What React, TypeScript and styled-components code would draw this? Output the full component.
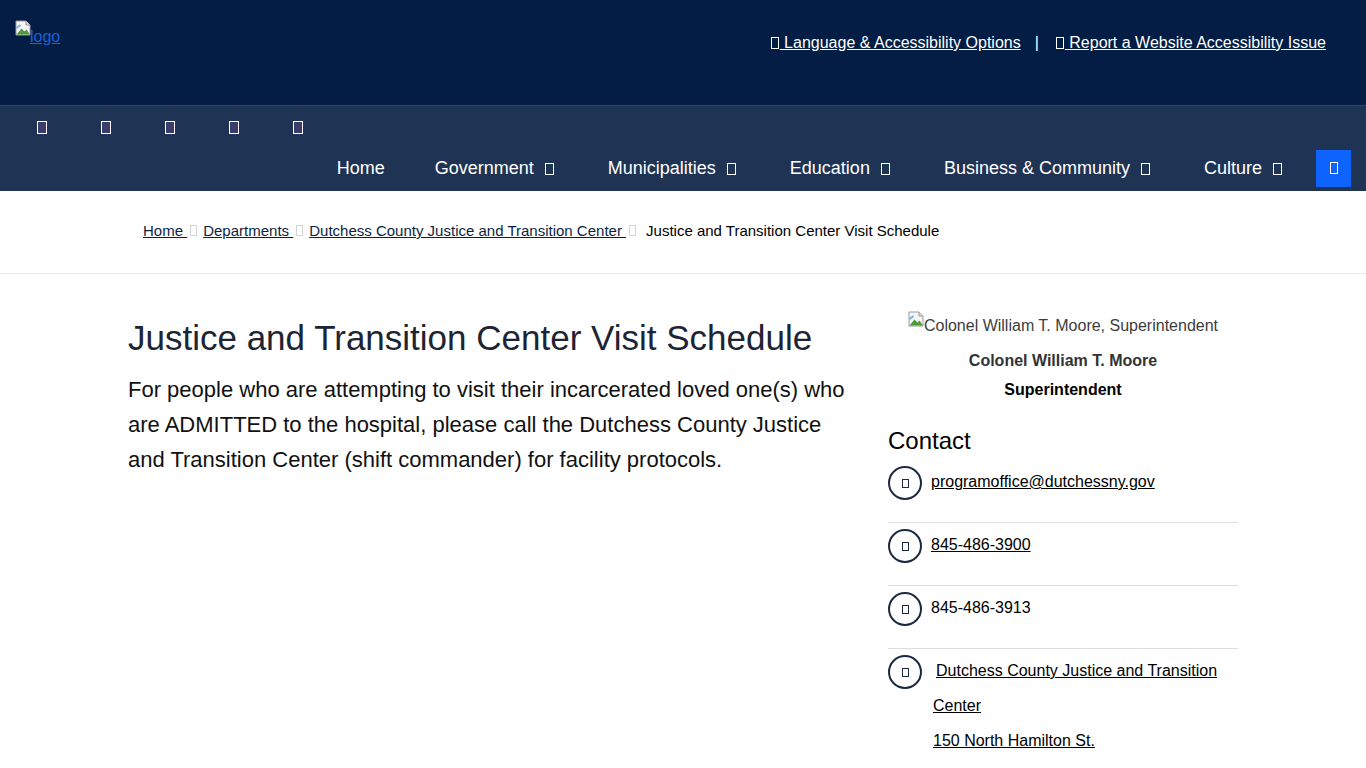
import React from "react";
import styled, { createGlobalStyle } from "styled-components";

const GlobalStyle = createGlobalStyle`
  *, *::before, *::after { box-sizing: border-box; }
  body {
    margin: 0;
    font-family: "Liberation Sans", Arial, sans-serif;
    font-size: 16px;
    color: #000;
    background: #fff;
  }
  p, h1, h2, h3 { margin: 0; }
`;

const Tofu = styled.span<{ w?: number; h?: number; fill?: string; color?: string }>`
  display: inline-block;
  width: ${(p) => p.w ?? 9}px;
  height: ${(p) => p.h ?? 12}px;
  border: 1px solid ${(p) => p.color ?? "currentColor"};
  background: ${(p) => p.fill ?? "transparent"};
  vertical-align: middle;
  flex: none;
`;

const TopBar = styled.header`
  background: #031d44;
  height: 105px;
  display: flex;
  justify-content: space-between;
  align-items: flex-start;
  padding: 20px 40px 0 15px;
`;

const LogoLink = styled.a`
  display: inline-flex;
  align-items: flex-start;
  color: #1d5fd8;
  font-size: 16px;
  line-height: 18px;
  text-decoration: underline;
  svg { margin-right: -1px; }
  span { padding-top: 8px; }
`;

const UtilityLinks = styled.div`
  display: flex;
  align-items: center;
  margin-top: 14px;
  color: #fff;
  font-size: 16px;
  line-height: 18px;
`;

const UtilityLink = styled.a`
  display: inline-flex;
  align-items: center;
  color: #fff;
  text-decoration: underline;
  white-space: pre;
  ${Tofu} { margin: 0 1px 0 2px; }
`;

const Pipe = styled.span`
  margin: 0 15px 0 14px;
`;

const Nav = styled.nav`
  background: #1f3354;
  border-top: 1px solid #33466a;
  height: 86px;
  padding-top: 15px;
  display: flex;
  flex-direction: column;
`;

const QuickIcons = styled.div`
  display: flex;
  gap: 54px;
  padding-left: 37px;
  height: 13px;
  color: #fff;
`;

const MenuRow = styled.div`
  display: flex;
  justify-content: flex-end;
  align-items: center;
  padding-right: 15px;
  margin-top: 15px;
`;

const MenuItem = styled.a`
  display: inline-flex;
  align-items: center;
  padding: 0 25px;
  color: #fff;
  font-size: 18px;
  line-height: 37px;
  padding-top: 1px;
  text-decoration: none;
  ${Tofu} { margin: 0 4px 0 11px; }
`;

const SearchButton = styled.button`
  width: 35px;
  height: 37px;
  margin-left: 5px;
  border: none;
  background: #0d63fb;
  color: #fff;
  display: flex;
  align-items: center;
  justify-content: center;
  padding: 0;
`;

const Container = styled.div`
  width: 1140px;
  margin: 0 auto;
  padding: 0 15px;
`;

const BreadcrumbBar = styled.div`
  border-bottom: 1px solid #e8e8e8;
  height: 83px;
  padding-top: 31px;
`;

const Crumbs = styled.div`
  padding-left: 15px;
  display: flex;
  align-items: center;
  font-size: 15px;
  line-height: 17px;
`;

const CrumbLink = styled.a`
  color: #0a1f44;
  text-decoration: underline;
  white-space: pre;
`;

const CrumbSep = styled(Tofu)`
  margin: 0 6px 0 3px;
  color: #d4d4d4;
`;

const CrumbCurrent = styled.span`
  margin-left: 4px;
  color: #000;
`;

const Content = styled.div`
  display: grid;
  grid-template-columns: 730px 350px;
  column-gap: 30px;
`;

const Main = styled.main`
  padding-top: 43px;
`;

const Title = styled.h1`
  font-size: 35px;
  font-weight: 400;
  line-height: 42px;
  color: #1d2433;
  margin-bottom: 12px;
`;

const Lead = styled.p`
  font-size: 22px;
  line-height: 35px;
  color: #111;
  padding-top: 1px;
`;

const Aside = styled.aside`
  padding-top: 37px;
`;

const Profile = styled.div`
  text-align: center;
`;

const PhotoAlt = styled.div`
  display: inline-flex;
  align-items: flex-start;
  color: #3d3d3d;
  font-size: 16px;
  line-height: 20px;
  span { padding-top: 5px; }
`;

const Name = styled.div<{ dark?: boolean }>`
  font-weight: 700;
  font-size: 16px;
  line-height: 24px;
  color: ${(p) => (p.dark ? "#000" : "#333")};
  margin-top: ${(p) => (p.dark ? 5 : 13)}px;
`;

const ContactTitle = styled.h2`
  font-size: 24px;
  font-weight: 400;
  line-height: 29px;
  margin-top: 24px;
  margin-bottom: 5px;
`;

const ContactRow = styled.div<{ last?: boolean }>`
  display: flex;
  align-items: flex-start;
  gap: 9px;
  padding: 6px 0 22px;
  border-bottom: ${(p) => (p.last ? "none" : "1px solid #dedede")};
  &:first-of-type { padding-top: 0; }
`;

const Circle = styled.span`
  width: 34px;
  height: 34px;
  border-radius: 50%;
  border: 2px solid #1b2a41;
  display: flex;
  align-items: center;
  justify-content: center;
  flex: none;
  color: #1b2a41;
`;

const ContactText = styled.div<{ inset?: boolean }>`
  font-size: 16px;
  line-height: 35px;
  color: #000;
  margin-top: -2px;
  padding-left: ${(p) => (p.inset ? 2 : 0)}px;
  a { color: #000; text-decoration: underline; }
`;

const AddressFirst = styled.a`
  margin-left: 3px;
`;

const BrokenImage = () => (
  <svg width="16" height="16" viewBox="0 0 16 16">
    <path d="M1 1h10l4 4v10H1z" fill="#f4f4f4" stroke="#9a9a9a" strokeWidth="1" />
    <path d="M11 1v4h4" fill="#dcdcdc" stroke="#9a9a9a" strokeWidth="1" />
    <path d="M1.5 14.5l5-6 3 3 2-2 3.5 5z" fill="#4f9a3a" />
    <path d="M1.5 8l4-3" stroke="#7fb0e6" strokeWidth="2" />
  </svg>
);

const menu = [
  { label: "Home", sub: false },
  { label: "Government", sub: true },
  { label: "Municipalities", sub: true },
  { label: "Education", sub: true },
  { label: "Business & Community", sub: true },
  { label: "Culture", sub: true },
];

export default function App() {
  return (
    <>
      <GlobalStyle />
      <TopBar>
        <LogoLink href="#">
          <BrokenImage />
          <span>logo</span>
        </LogoLink>
        <UtilityLinks>
          <UtilityLink href="#">
            <Tofu w={8} h={12} />
            {" Language & Accessibility Options"}
          </UtilityLink>
          <Pipe>|</Pipe>
          <UtilityLink href="#">
            <Tofu w={8} h={12} />
            {" Report a Website Accessibility Issue"}
          </UtilityLink>
        </UtilityLinks>
      </TopBar>
      <Nav>
        <QuickIcons>
          {[0, 1, 2, 3, 4].map((i) => (
            <Tofu key={i} w={10} h={13} fill="#3a3d6b" />
          ))}
        </QuickIcons>
        <MenuRow>
          {menu.map((m) => (
            <MenuItem key={m.label} href="#">
              {m.label}
              {m.sub && <Tofu w={9} h={12} />}
            </MenuItem>
          ))}
          <SearchButton aria-label="Search">
            <Tofu w={8} h={12} />
          </SearchButton>
        </MenuRow>
      </Nav>
      <BreadcrumbBar>
        <Container>
          <Crumbs>
            <CrumbLink href="#">Home </CrumbLink>
            <CrumbSep w={7} h={11} />
            <CrumbLink href="#">Departments </CrumbLink>
            <CrumbSep w={7} h={11} />
            <CrumbLink href="#">Dutchess County Justice and Transition Center </CrumbLink>
            <CrumbSep w={7} h={11} />
            <CrumbCurrent>Justice and Transition Center Visit Schedule</CrumbCurrent>
          </Crumbs>
        </Container>
      </BreadcrumbBar>
      <Container>
        <Content>
          <Main>
            <Title>Justice and Transition Center Visit Schedule</Title>
            <Lead>
              For people who are attempting to visit their incarcerated loved one(s) who are
              ADMITTED to the hospital, please call the Dutchess County Justice and Transition
              Center (shift commander) for facility protocols.
            </Lead>
          </Main>
          <Aside>
            <Profile>
              <PhotoAlt>
                <BrokenImage />
                <span>Colonel William T. Moore, Superintendent</span>
              </PhotoAlt>
              <Name>Colonel William T. Moore</Name>
              <Name dark>Superintendent</Name>
            </Profile>
            <ContactTitle>Contact</ContactTitle>
            <ContactRow>
              <Circle>
                <Tofu w={7} h={9} />
              </Circle>
              <ContactText>
                <a href="#">programoffice@dutchessny.gov</a>
              </ContactText>
            </ContactRow>
            <ContactRow>
              <Circle>
                <Tofu w={7} h={9} />
              </Circle>
              <ContactText>
                <a href="#">845-486-3900</a>
              </ContactText>
            </ContactRow>
            <ContactRow>
              <Circle>
                <Tofu w={7} h={9} />
              </Circle>
              <ContactText>845-486-3913</ContactText>
            </ContactRow>
            <ContactRow last>
              <Circle>
                <Tofu w={7} h={9} />
              </Circle>
              <ContactText inset>
                <AddressFirst href="#">Dutchess County Justice and Transition Center</AddressFirst>
                <br />
                <a href="#">150 North Hamilton St.</a>
                <br />
                <a href="#">Poughkeepsie, NY 12601</a>
              </ContactText>
            </ContactRow>
          </Aside>
        </Content>
      </Container>
    </>
  );
}
